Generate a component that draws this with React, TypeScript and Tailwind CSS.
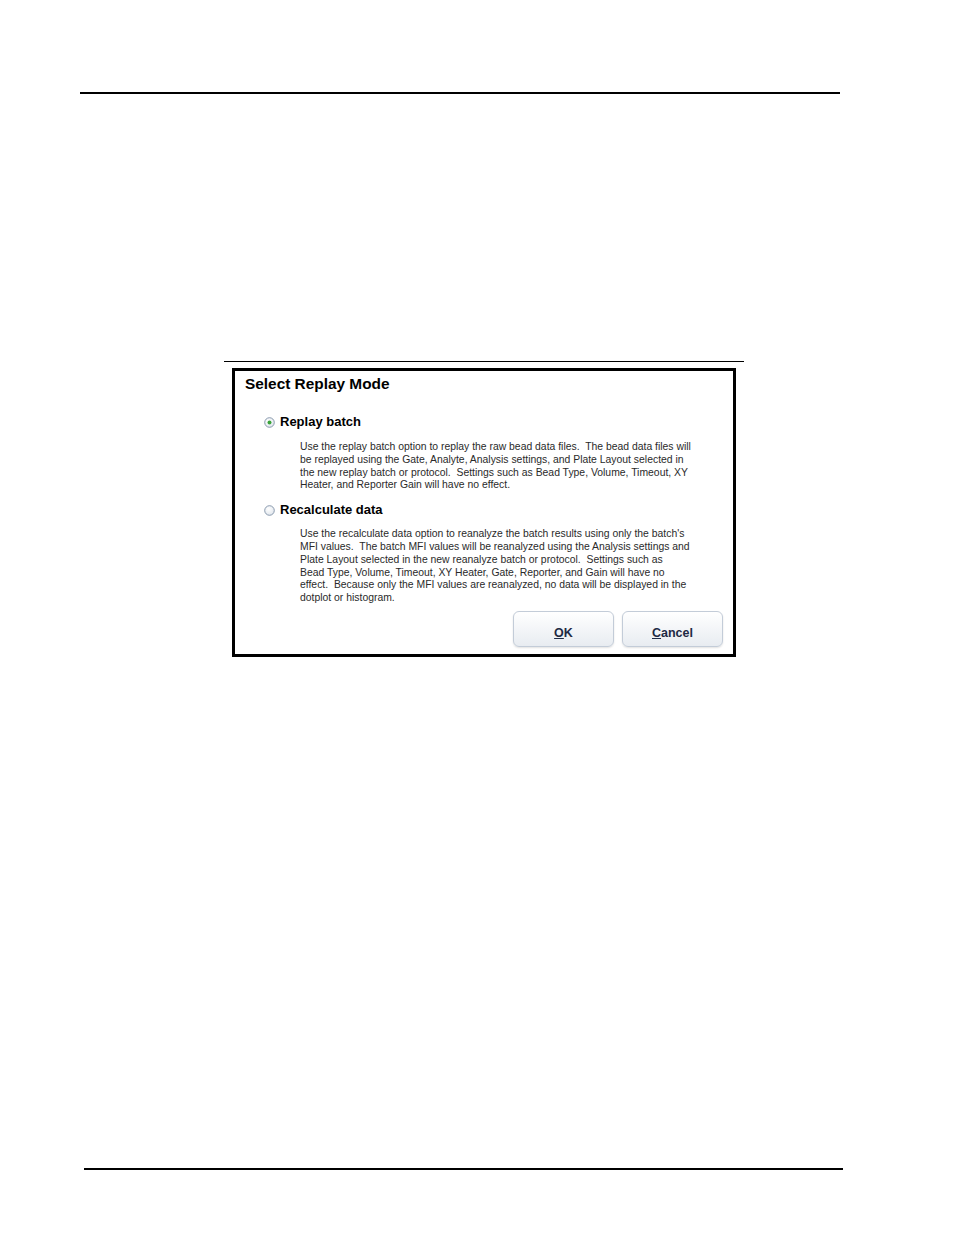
const font = { fontFamily: '"Liberation Sans", Arial, sans-serif' };

function Radio({ checked }: { checked?: boolean }) {
  return (
    <svg width="11" height="11" viewBox="0 0 11 11" className="shrink-0">
      <defs>
        <radialGradient id={checked ? "rg1" : "rg2"} cx="0.4" cy="0.35" r="0.7">
          <stop offset="0" stopColor="#ffffff" />
          <stop offset="1" stopColor="#dfe5ec" />
        </radialGradient>
      </defs>
      <circle cx="5.5" cy="5.5" r="4.8" fill={`url(#${checked ? "rg1" : "rg2"})`} stroke="#7f91a6" strokeWidth="0.9" />
      {checked && <circle cx="5.5" cy="5.5" r="2" fill="#3aa33a" />}
    </svg>
  );
}

function Para({ lines }: { lines: string[] }) {
  return (
    <div className="ml-[65px] text-[10.4px] leading-[12.8px] text-[#2a2a2a]">
      {lines.map((l) => (
        <div key={l} className="whitespace-pre">{l}</div>
      ))}
    </div>
  );
}

function Btn({ u, rest }: { u: string; rest: string }) {
  return (
    <button className="w-[101px] h-[36px] pt-[8px] rounded-[6px] border border-[#c3ccd8] bg-linear-to-b from-white to-[#e8ecf1] shadow-[0_1px_2px_rgba(0,0,0,0.12)] text-[12.5px] font-bold text-[#1f2a44]">
      <span className="underline">{u}</span>
      {rest}
    </button>
  );
}

export default function App() {
  return (
    <div className="w-[954px] h-[1235px] bg-white relative" style={font}>
      <div className="pt-[92px]">
        <div className="ml-[80px] w-[760px] h-[2px] bg-black" />
      </div>

      <div className="mt-[267px] ml-[224px] w-[520px] h-px bg-black" />

      <div className="mt-[6px] ml-[232px] w-[504px] h-[289px] border-[3px] border-black bg-white flex flex-col">
        <div className="mt-[4px] ml-[10px] text-[15.4px] leading-[18px] font-bold text-black">
          Select Replay Mode
        </div>

        <div className="mt-[21px] ml-[29px] flex items-center gap-[5px] h-[16px]">
          <Radio checked />
          <span className="text-[13px] font-bold text-black">Replay batch</span>
        </div>
        <div className="mt-[11px]">
          <Para
            lines={[
              "Use the replay batch option to replay the raw bead data files.  The bead data files will",
              "be replayed using the Gate, Analyte, Analysis settings, and Plate Layout selected in",
              "the new replay batch or protocol.  Settings such as Bead Type, Volume, Timeout, XY",
              "Heater, and Reporter Gain will have no effect.",
            ]}
          />
        </div>

        <div className="mt-[10px] ml-[29px] flex items-center gap-[5px] h-[16px]">
          <Radio />
          <span className="text-[13px] font-bold text-black">Recalculate data</span>
        </div>
        <div className="mt-[10px]">
          <Para
            lines={[
              "Use the recalculate data option to reanalyze the batch results using only the batch's",
              "MFI values.  The batch MFI values will be reanalyzed using the Analysis settings and",
              "Plate Layout selected in the new reanalyze batch or protocol.  Settings such as",
              "Bead Type, Volume, Timeout, XY Heater, Gate, Reporter, and Gain will have no",
              "effect.  Because only the MFI values are reanalyzed, no data will be displayed in the",
              "dotplot or histogram.",
            ]}
          />
        </div>

        <div className="mt-[6px] mr-[10px] flex justify-end gap-[8px]">
          <Btn u="O" rest="K" />
          <Btn u="C" rest="ancel" />
        </div>
      </div>

      <div className="mt-[511px] ml-[84px] w-[759px] h-[2px] bg-black" />
    </div>
  );
}
